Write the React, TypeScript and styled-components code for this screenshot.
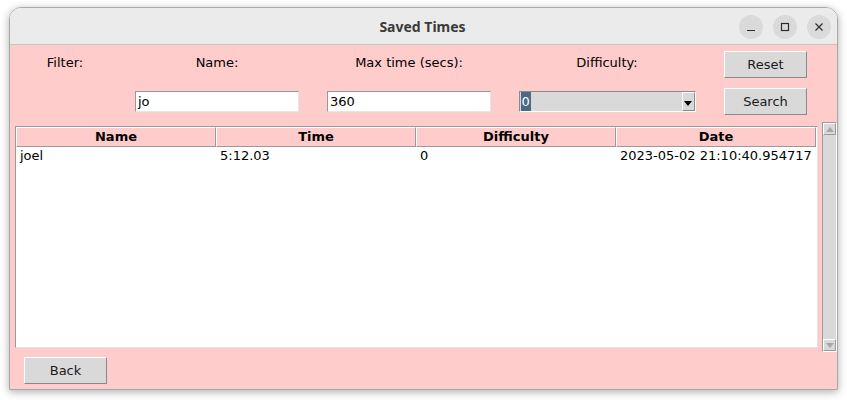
import React from "react";
import styled, { createGlobalStyle } from "styled-components";

const Global = createGlobalStyle`
  html, body { margin: 0; padding: 0; background: #ffffff; }
  body { width: 847px; height: 400px; overflow: hidden; }
`;

const Page = styled.div`
  padding: 7px 0 0 9px;
`;

const Window = styled.div`
  width: 827px;
  height: 381px;
  border: 1px solid #a9a9a9;
  border-radius: 12px 12px 0 0;
  box-shadow: 0 2px 9px rgba(0, 0, 0, 0.32);
  overflow: hidden;
  display: flex;
  flex-direction: column;
`;

const TitleBar = styled.div`
  height: 36px;
  flex: none;
  background: #ebebeb;
  border-bottom: 1px solid #c6c6c6;
  display: flex;
  align-items: center;
  justify-content: center;
  position: relative;
`;

const Title = styled.div`
  font-family: "Noto Sans", "DejaVu Sans", sans-serif;
  font-weight: 700;
  font-size: 14px;
  color: #3a3a3a;
  padding-right: 2px;
`;

const Controls = styled.div`
  position: absolute;
  right: 6px;
  top: 7px;
  display: flex;
  gap: 10px;
`;

const CircleBtn = styled.div`
  width: 24px;
  height: 24px;
  border-radius: 50%;
  background: #dadada;
  display: flex;
  align-items: center;
  justify-content: center;
  color: #2e2e2e;
`;

const Body = styled.div`
  flex: 1;
  background: #ffcccc;
  padding: 6px 0 5px 0;
  display: flex;
  flex-direction: column;
  font-family: "DejaVu Sans", sans-serif;
  font-size: 13px;
  color: #000;
`;

const FilterGrid = styled.div`
  display: grid;
  grid-template-columns: 110px 194px 190px 206px 111px;
  grid-template-rows: 27px 27px;
  row-gap: 10px;
  align-items: center;
  justify-items: center;
`;

const Label = styled.div`
  line-height: 16px;
  white-space: nowrap;
  padding-bottom: 3px;
`;

const Button = styled.div`
  box-sizing: border-box;
  width: 83px;
  height: 27px;
  background: #d9d9d9;
  border: 1px solid;
  border-color: #ffffff #8a8a8a #8a8a8a #ffffff;
  display: flex;
  align-items: center;
  justify-content: center;
  font-size: 13px;
  color: #1a1a1a;
`;

const Entry = styled.div`
  box-sizing: border-box;
  width: 164px;
  height: 21px;
  background: #ffffff;
  border: 1px solid;
  border-color: #9a9a9a #e6e6e6 #e6e6e6 #9a9a9a;
  padding-left: 2px;
  display: flex;
  align-items: center;
  line-height: 16px;
`;

const Combo = styled.div`
  box-sizing: border-box;
  width: 177px;
  height: 21px;
  background: #d9d9d9;
  border: 1px solid;
  border-color: #8a8a8a #ffffff #ffffff #8a8a8a;
  display: flex;
  align-items: stretch;
`;

const ComboText = styled.div`
  flex: 1;
  display: flex;
  align-items: center;
  padding-left: 1px;
`;

const Selected = styled.span`
  background: #4a6984;
  color: #ffffff;
  line-height: 19px;
  padding: 0 1px;
`;

const ComboArrow = styled.div`
  box-sizing: border-box;
  width: 13px;
  border: 1px solid;
  border-color: #ffffff #8a8a8a #8a8a8a #ffffff;
  display: flex;
  align-items: flex-end;
  justify-content: center;
  padding-bottom: 4px;
`;

const TableRow = styled.div`
  margin-top: 7px;
  height: 230px;
  display: flex;
  align-items: center;
  padding-left: 5px;
  gap: 4px;
`;

const Tree = styled.div`
  box-sizing: border-box;
  width: 803px;
  height: 222px;
  background: #ffffff;
  border: 1px solid;
  border-color: #9a9a9a #e2e2e2 #e2e2e2 #9a9a9a;
  display: flex;
  flex-direction: column;
`;

const HeaderRow = styled.div`
  display: grid;
  grid-template-columns: 200px 200px 200px 200px;
  height: 20px;
`;

const HeaderCell = styled.div`
  box-sizing: border-box;
  background: #ffcccc;
  border: 1px solid;
  border-color: #ffffff #9a9a9a #9a9a9a #ffffff;
  font-weight: 700;
  display: flex;
  align-items: center;
  justify-content: center;
  line-height: 16px;
`;

const DataRow = styled.div`
  display: grid;
  grid-template-columns: 200px 200px 200px 200px;
  height: 18px;
  align-items: center;
`;

const DataCell = styled.div`
  padding-left: 4px;
  line-height: 16px;
  white-space: nowrap;
`;

const Scrollbar = styled.div`
  box-sizing: border-box;
  width: 15px;
  height: 230px;
  background: #d9d9d9;
  border: 1px solid;
  border-color: #9a9a9a #ffffff #ffffff #9a9a9a;
  display: flex;
  flex-direction: column;
  justify-content: space-between;
`;

const ScrollArrow = styled.div`
  box-sizing: border-box;
  height: 12px;
  border: 1px solid;
  border-color: #ffffff #9a9a9a #9a9a9a #ffffff;
  display: flex;
  align-items: center;
  justify-content: center;
`;

const BackWrap = styled.div`
  margin-top: 5px;
  padding-left: 14px;
`;

const Tri = ({ up, color, w }: { up?: boolean; color: string; w: number }) => (
  <svg width={w} height={w / 2 + 1} viewBox={`0 0 ${w} ${w / 2 + 1}`}>
    <polygon
      points={up ? `0,${w / 2 + 1} ${w},${w / 2 + 1} ${w / 2},0` : `0,0 ${w},0 ${w / 2},${w / 2 + 1}`}
      fill={color}
    />
  </svg>
);

export default function App() {
  return (
    <>
      <Global />
      <Page>
        <Window>
          <TitleBar>
            <Title>Saved Times</Title>
            <Controls>
              <CircleBtn>
                <svg width="10" height="10" viewBox="0 0 10 10">
                  <line x1="1" y1="8.5" x2="9" y2="8.5" stroke="#2e2e2e" strokeWidth="1.2" />
                </svg>
              </CircleBtn>
              <CircleBtn>
                <svg width="10" height="10" viewBox="0 0 10 10">
                  <rect x="1.5" y="1.5" width="7" height="7" fill="none" stroke="#2e2e2e" strokeWidth="1.2" />
                </svg>
              </CircleBtn>
              <CircleBtn>
                <svg width="10" height="10" viewBox="0 0 10 10">
                  <path d="M1.5 1.5 L8.5 8.5 M8.5 1.5 L1.5 8.5" stroke="#2e2e2e" strokeWidth="1.2" />
                </svg>
              </CircleBtn>
            </Controls>
          </TitleBar>
          <Body>
            <FilterGrid>
              <Label>Filter:</Label>
              <Label>Name:</Label>
              <Label>Max time (secs):</Label>
              <Label>Difficulty:</Label>
              <Button>Reset</Button>
              <div />
              <Entry>jo</Entry>
              <Entry>360</Entry>
              <Combo>
                <ComboText>
                  <Selected>0</Selected>
                </ComboText>
                <ComboArrow>
                  <Tri color="#000" w={8} />
                </ComboArrow>
              </Combo>
              <Button>Search</Button>
            </FilterGrid>
            <TableRow>
              <Tree>
                <HeaderRow>
                  <HeaderCell>Name</HeaderCell>
                  <HeaderCell>Time</HeaderCell>
                  <HeaderCell>Difficulty</HeaderCell>
                  <HeaderCell>Date</HeaderCell>
                </HeaderRow>
                <DataRow>
                  <DataCell>joel</DataCell>
                  <DataCell>5:12.03</DataCell>
                  <DataCell>0</DataCell>
                  <DataCell>2023-05-02 21:10:40.954717</DataCell>
                </DataRow>
              </Tree>
              <Scrollbar>
                <ScrollArrow>
                  <Tri up color="#a8a8a8" w={8} />
                </ScrollArrow>
                <ScrollArrow>
                  <Tri color="#a8a8a8" w={8} />
                </ScrollArrow>
              </Scrollbar>
            </TableRow>
            <BackWrap>
              <Button>Back</Button>
            </BackWrap>
          </Body>
        </Window>
      </Page>
    </>
  );
}
